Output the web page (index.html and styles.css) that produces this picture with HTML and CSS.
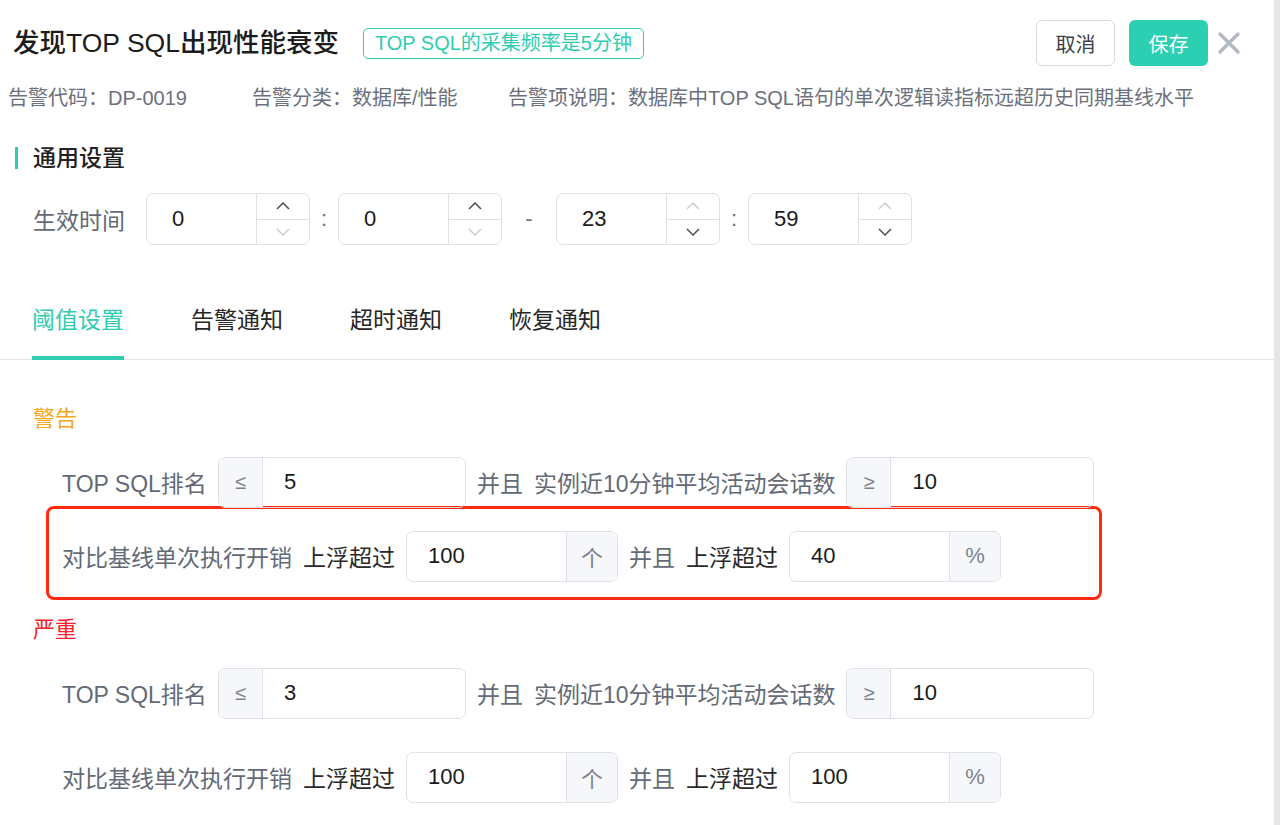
FILE: index.html
```html
<!DOCTYPE html>
<html lang="zh-CN">
<head>
    <meta charset="UTF-8">
    <title>发现TOP SQL出现性能衰变</title>
    <link rel="stylesheet" href="styles.css">
</head>
<body>
<div class="trang">
<div class="khung-chinh">
    <!-- 标题栏 -->
    <div class="tieu-de">
        <h1>发现TOP SQL出现性能衰变</h1>
        <span class="nhan">TOP SQL的采集频率是5分钟</span>
        <div class="nut-nhom">
            <button class="nut nut-huy">取消</button>
            <button class="nut nut-luu">保存</button>
            <svg class="dong" width="24" height="24" viewBox="0 0 24 24">
                <path d="M3 3 L21 21 M21 3 L3 21" stroke="#b3b8c2" stroke-width="3.4" stroke-linecap="round"/>
            </svg>
        </div>
    </div>
    <div class="thong-tin">
        <span class="muc-1">告警代码：DP-0019</span>
        <span class="muc-2">告警分类：数据库/性能</span>
        <span>告警项说明：数据库中TOP SQL语句的单次逻辑读指标远超历史同期基线水平</span>
    </div>

    <!-- 通用设置 -->
    <div class="phan-tieu-de">通用设置</div>
    <div class="hang-thoi-gian">
        <span class="nhan-xam">生效时间</span>
        <div class="o-so">
            <input type="text" value="0">
            <div class="mui-ten">
                <span class="len dam"><svg width="14" height="8" viewBox="0 0 14 8"><path d="M1 7 L7 1 L13 7" fill="none" stroke="currentColor" stroke-width="1.5"/></svg></span>
                <span class="xuong"><svg width="14" height="8" viewBox="0 0 14 8"><path d="M1 1 L7 7 L13 1" fill="none" stroke="currentColor" stroke-width="1.5"/></svg></span>
            </div>
        </div>
        <span class="dau-cham">:</span>
        <div class="o-so">
            <input type="text" value="0">
            <div class="mui-ten">
                <span class="len dam"><svg width="14" height="8" viewBox="0 0 14 8"><path d="M1 7 L7 1 L13 7" fill="none" stroke="currentColor" stroke-width="1.5"/></svg></span>
                <span class="xuong"><svg width="14" height="8" viewBox="0 0 14 8"><path d="M1 1 L7 7 L13 1" fill="none" stroke="currentColor" stroke-width="1.5"/></svg></span>
            </div>
        </div>
        <span class="gach">-</span>
        <div class="o-so">
            <input type="text" value="23">
            <div class="mui-ten">
                <span class="len"><svg width="14" height="8" viewBox="0 0 14 8"><path d="M1 7 L7 1 L13 7" fill="none" stroke="currentColor" stroke-width="1.5"/></svg></span>
                <span class="xuong dam"><svg width="14" height="8" viewBox="0 0 14 8"><path d="M1 1 L7 7 L13 1" fill="none" stroke="currentColor" stroke-width="1.5"/></svg></span>
            </div>
        </div>
        <span class="dau-cham">:</span>
        <div class="o-so">
            <input type="text" value="59">
            <div class="mui-ten">
                <span class="len"><svg width="14" height="8" viewBox="0 0 14 8"><path d="M1 7 L7 1 L13 7" fill="none" stroke="currentColor" stroke-width="1.5"/></svg></span>
                <span class="xuong dam"><svg width="14" height="8" viewBox="0 0 14 8"><path d="M1 1 L7 7 L13 1" fill="none" stroke="currentColor" stroke-width="1.5"/></svg></span>
            </div>
        </div>
    </div>

    <!-- 标签页 -->
    <div class="the">
        <span class="the-muc dang-chon">阈值设置</span>
        <span class="the-muc">告警通知</span>
        <span class="the-muc">超时通知</span>
        <span class="the-muc">恢复通知</span>
    </div>

    <!-- 警告 -->
    <div class="muc-do canh-bao">警告</div>
    <div class="hang dong-1">
        <span class="nhan-xam">TOP SQL排名</span>
        <div class="o-nhom rong">
            <span class="ky-hieu">≤</span>
            <input type="text" value="5">
        </div>
        <span class="nhan-xam">并且</span>
        <span class="nhan-xam">实例近10分钟平均活动会话数</span>
        <div class="o-nhom rong">
            <span class="ky-hieu">≥</span>
            <input type="text" value="10">
        </div>
    </div>
    <div class="khung-do">
        <div class="hang">
            <span class="nhan-xam">对比基线单次执行开销</span>
            <span class="nhan-dam">上浮超过</span>
            <div class="o-nhom">
                <input type="text" value="100">
                <span class="ky-hieu sau">个</span>
            </div>
            <span class="nhan-xam">并且</span>
            <span class="nhan-dam">上浮超过</span>
            <div class="o-nhom">
                <input type="text" value="40">
                <span class="ky-hieu sau">%</span>
            </div>
        </div>
    </div>

    <!-- 严重 -->
    <div class="muc-do nghiem-trong">严重</div>
    <div class="hang dong-1">
        <span class="nhan-xam">TOP SQL排名</span>
        <div class="o-nhom rong">
            <span class="ky-hieu">≤</span>
            <input type="text" value="3">
        </div>
        <span class="nhan-xam">并且</span>
        <span class="nhan-xam">实例近10分钟平均活动会话数</span>
        <div class="o-nhom rong">
            <span class="ky-hieu">≥</span>
            <input type="text" value="10">
        </div>
    </div>
    <div class="hang dong-2">
        <span class="nhan-xam">对比基线单次执行开销</span>
        <span class="nhan-dam">上浮超过</span>
        <div class="o-nhom">
            <input type="text" value="100">
            <span class="ky-hieu sau">个</span>
        </div>
        <span class="nhan-xam">并且</span>
        <span class="nhan-dam">上浮超过</span>
        <div class="o-nhom">
            <input type="text" value="100">
            <span class="ky-hieu sau">%</span>
        </div>
    </div>
</div>
<div class="thanh-cuon"></div>
</div>
</body>
</html>
```

FILE: styles.css
```css
body {
    margin: 0;
    font-family: "Liberation Sans", "Noto Sans CJK SC", sans-serif;
    background-color: #fff;
    color: #222;
}

.trang {
    display: flex;
    height: 825px;
    overflow: hidden;
}

.khung-chinh {
    flex: 1;
}

.thanh-cuon {
    width: 6px;
    background-color: #e6e6e6;
}

/* 标题栏 */
.tieu-de {
    display: flex;
    align-items: center;
    height: 46px;
    margin-top: 20px;
    padding-left: 13px;
    padding-right: 33px;
}

.tieu-de h1 {
    margin: 0;
    font-size: 26.5px;
    font-weight: 500;
    color: #1c1c1c;
    line-height: 32px;
}

.nhan {
    margin-left: 24px;
    border: 1.5px solid #2ecdb0;
    border-radius: 5px;
    color: #2ecdb0;
    font-size: 20px;
    line-height: 29px;
    padding: 0 11px;
}

.nut-nhom {
    margin-left: auto;
    display: flex;
    align-items: center;
}

.nut {
    width: 79px;
    height: 46px;
    border-radius: 6px;
    font-family: inherit;
    font-size: 20px;
    cursor: pointer;
}

.nut-huy {
    background-color: #fff;
    border: 1.5px solid #dcdcdc;
    color: #3a3f4a;
}

.nut-luu {
    margin-left: 14px;
    background-color: #2ccfb1;
    border: none;
    color: #fff;
}

.dong {
    margin-left: 9px;
}

.thong-tin {
    display: flex;
    margin-top: 19px;
    padding-left: 8px;
    font-size: 20px;
    line-height: 26px;
    color: #6b717c;
}

.muc-1 {
    width: 244px;
}

.muc-2 {
    width: 256px;
}

/* 通用设置 */
.phan-tieu-de {
    margin: 36px 0 0 15px;
    border-left: 3px solid #2ecdb0;
    padding-left: 15px;
    font-size: 23px;
    font-weight: 500;
    line-height: 22px;
    height: 22px;
}

.hang-thoi-gian {
    display: flex;
    align-items: center;
    margin-top: 24px;
    padding-left: 33px;
}

.nhan-xam {
    font-size: 23px;
    color: #636a75;
    white-space: nowrap;
}

.nhan-dam {
    font-size: 23px;
    color: #2a2a2a;
    white-space: nowrap;
}

.hang-thoi-gian .nhan-xam {
    margin-right: 21px;
}

.o-so {
    display: flex;
    width: 164px;
    height: 52px;
    box-sizing: border-box;
    border: 1.5px solid #dfe1e6;
    border-radius: 7px;
}

input {
    border: none;
    outline: none;
    font-family: inherit;
    font-size: 22px;
    color: #1a1a1a;
    background: transparent;
    min-width: 0;
}

.o-so input {
    flex: 1;
    padding-left: 25px;
}

.mui-ten {
    width: 52px;
    display: flex;
    flex-direction: column;
    border-left: 1.5px solid #dfe1e6;
}

.mui-ten span {
    flex: 1;
    display: flex;
    align-items: center;
    justify-content: center;
    color: #c8ccd4;
}

.mui-ten .len {
    border-bottom: 1.5px solid #dfe1e6;
}

.mui-ten .dam {
    color: #4b505a;
}

.dau-cham {
    width: 28px;
    text-align: center;
    font-size: 22px;
    color: #6b717c;
}

.gach {
    width: 54px;
    text-align: center;
    font-size: 22px;
    color: #6b717c;
}

/* 标签页 */
.the {
    display: flex;
    gap: 67px;
    margin-top: 59px;
    padding-left: 32px;
    border-bottom: 1.5px solid #e6e6e6;
}

.the-muc {
    font-size: 23px;
    line-height: 32px;
    padding-bottom: 20px;
    color: #262626;
    border-bottom: 4px solid transparent;
    margin-bottom: -1.5px;
}

.the-muc.dang-chon {
    color: #2ecdb0;
    border-bottom-color: #2ecdb0;
}

/* 阈值 */
.muc-do {
    font-size: 22px;
    line-height: 32px;
    padding-left: 33px;
}

.canh-bao {
    margin-top: 43px;
    color: #f5a623;
}

.nghiem-trong {
    margin-top: 14px;
    color: #f5222d;
}

.hang {
    display: flex;
    align-items: center;
    gap: 11px;
    padding-left: 62px;
}

.dong-1 {
    margin-top: 22px;
}

.dong-2 {
    margin-top: 33px;
}

.o-nhom {
    display: flex;
    width: 212px;
    height: 51px;
    box-sizing: border-box;
    border: 1.5px solid #dfe1e6;
    border-radius: 7px;
    overflow: hidden;
}

.o-nhom.rong {
    width: 248px;
}

.o-nhom input {
    flex: 1;
    padding-left: 21px;
}

.ky-hieu {
    width: 43px;
    display: flex;
    align-items: center;
    justify-content: center;
    background-color: #f5f7fa;
    border-right: 1.5px solid #dfe1e6;
    color: #7d838e;
    font-size: 20px;
}

.ky-hieu.sau {
    width: 50px;
    border-right: none;
    border-left: 1.5px solid #dfe1e6;
    font-size: 22px;
}

.khung-do {
    width: 1056px;
    box-sizing: border-box;
    margin: -2px 0 0 46px;
    border: 3px solid #ff2a12;
    border-radius: 8px;
    padding: 22px 0 15px;
}

.khung-do .hang {
    padding-left: 13px;
}
```
